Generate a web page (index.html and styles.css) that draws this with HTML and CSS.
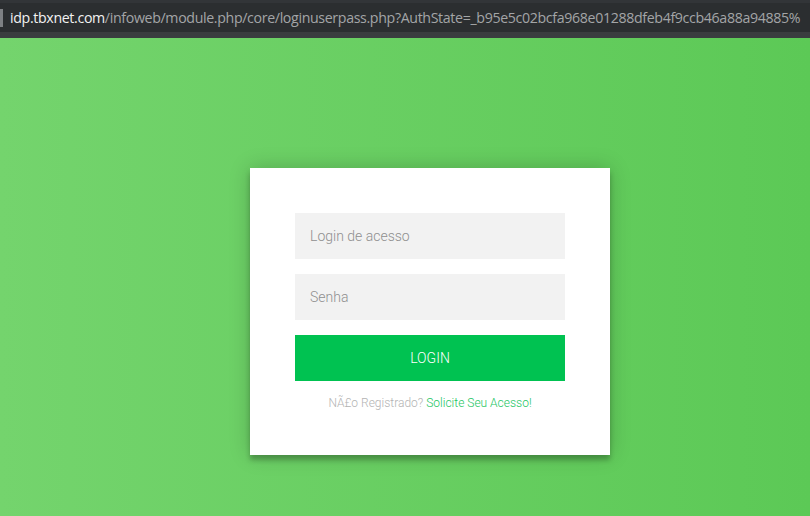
FILE: index.html
```html
<!DOCTYPE html>
<html lang="pt">
<head>
<meta charset="utf-8">
<title>Login</title>
<link rel="stylesheet" href="styles.css">
</head>
<body>
<div class="urlbar">
  <span class="caret"></span>
  <span class="url"><span class="host">idp.tbxnet.com</span>/infoweb/module.php/core/loginuserpass.php?AuthState=_b95e5c02bcfa968e01288dfeb4f9ccb46a88a94885%</span>
</div>
<main class="page">
  <form class="form">
    <input class="field" type="text" placeholder="Login de acesso">
    <input class="field" type="password" placeholder="Senha">
    <button class="btn" type="button">login</button>
    <p class="message">NÃ£o Registrado? <a href="#">Solicite Seu Acesso!</a></p>
  </form>
</main>
</body>
</html>
```
FILE: styles.css
```css
* { box-sizing: border-box; }
html, body { margin: 0; padding: 0; height: 100%; }
body {
  display: flex;
  flex-direction: column;
  font-family: Roboto, "Liberation Sans", sans-serif;
  background: #62cd5c;
  overflow: hidden;
}
.urlbar {
  height: 38px;
  flex: none;
  background: #2b2e30;
  border-top: 3px solid #323538;
  border-bottom: 6px solid #3a3d3f;
  display: flex;
  align-items: center;
  white-space: nowrap;
  overflow: hidden;
}
.caret {
  width: 3px;
  height: 18px;
  background: #7d8083;
  margin-right: 7px;
  flex: none;
}
.url {
  font-family: "Open Sans", "DejaVu Sans", sans-serif;
  font-size: 14.2px;
  color: #a3a5a7;
  letter-spacing: -0.35px;
}
.host { color: #f2f2f2; }
.page {
  flex: 1;
  background: linear-gradient(to right, #74d46d, #5cc956);
  display: flex;
  justify-content: center;
  align-items: flex-start;
  padding-top: 130px;
  padding-left: 50px;
}
.form {
  width: 360px;
  background: #fff;
  padding: 45px;
  text-align: center;
  box-shadow: 0 0 20px 0 rgba(0,0,0,0.2), 0 5px 5px 0 rgba(0,0,0,0.24);
  display: flex;
  flex-direction: column;
}
.field {
  font-family: Roboto, sans-serif;
  font-weight: 300;
  background: #f2f2f2;
  border: 0;
  outline: 0;
  width: 100%;
  height: 46px;
  margin: 0 0 15px;
  padding: 15px;
  font-size: 14px;
  color: #333;
}
.field::placeholder { color: #8f8f8f; }
.btn {
  font-family: Roboto, sans-serif;
  font-weight: 300;
  text-transform: uppercase;
  background: #00c251;
  border: 0;
  height: 46px;
  width: 100%;
  padding: 15px;
  color: #fff;
  font-size: 14px;
  cursor: pointer;
}
.message {
  margin: 15px 0 0;
  color: #b3b3b3;
  font-size: 12px;
  font-weight: 300;
  line-height: 14px;
}
.message a {
  color: #1bc55f;
  text-decoration: none;
}
```
